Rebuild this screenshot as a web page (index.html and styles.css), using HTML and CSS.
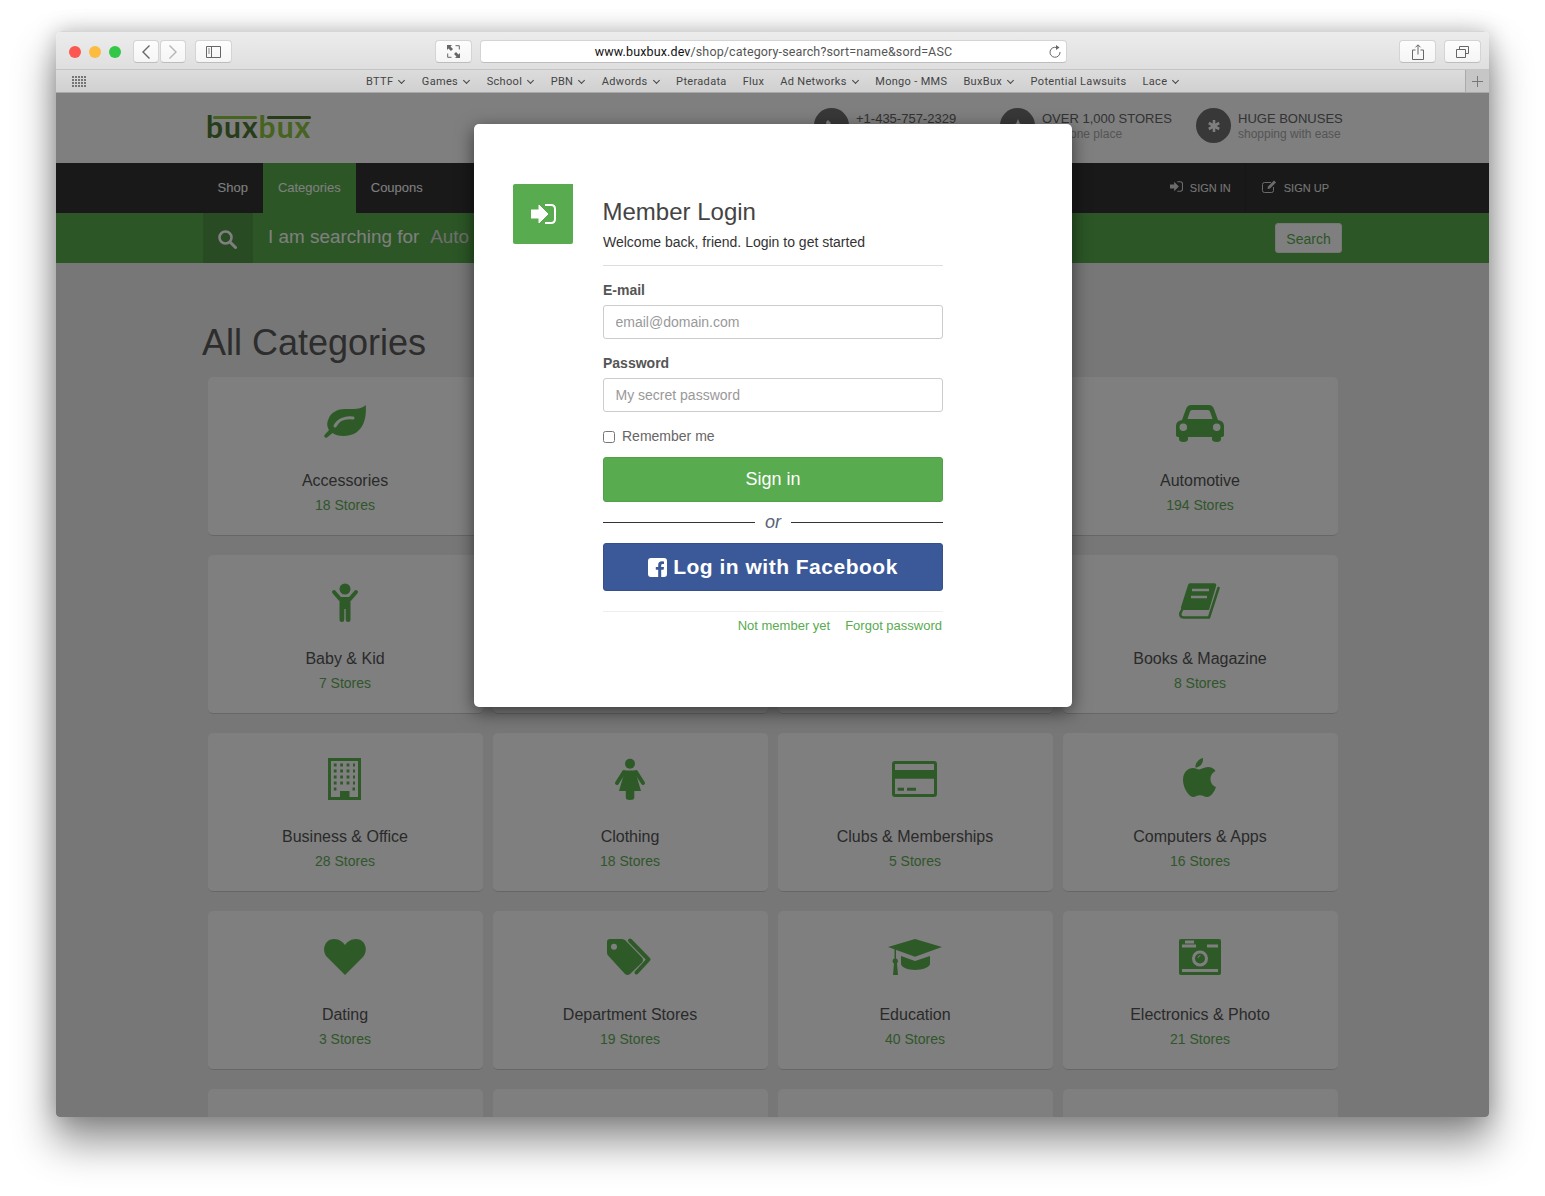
FILE: index.html
```html
<!DOCTYPE html>
<html lang="en">
<head>
  <meta charset="UTF-8">
  <meta name="viewport" content="width=device-width, initial-scale=1.0">
  <title>BuxBux - All Categories</title>
  <link rel="stylesheet" href="styles.css">
</head>
<body>
  <div class="window">
    <div class="toolbar">
      <div class="lights"><span class="light red"></span><span class="light yellow"></span><span class="light green"></span></div>
      <div class="nav-btns">
        <span class="tool-btn small"><svg width="10" height="16" viewBox="0 0 10 16"><path d="M8.5 1.5 2 8l6.5 6.5" fill="none" stroke="#666" stroke-width="1.4"/></svg></span>
        <span class="tool-btn small"><svg width="10" height="16" viewBox="0 0 10 16"><path d="M1.5 1.5 8 8l-6.5 6.5" fill="none" stroke="#b5b5b5" stroke-width="1.4"/></svg></span>
      </div>
      <span class="tool-btn sidebar-btn"><svg width="15" height="12" viewBox="0 0 15 12"><path d="M.5.5h14v11H.5zM5.5.5v11" fill="none" stroke="#666"/><path d="M2 3h2M2 5h2M2 7h2" stroke="#888"/></svg></span>
      <span class="tool-btn expand-btn"><svg width="13" height="13" viewBox="0 0 13 13"><path d="M0 0h5L3.5 1.5 6 4 4 6 1.5 3.5 0 5zM13 13H8l1.5-1.5L7 9l2-2 2.5 2.5L13 8z" fill="#666"/><path d="M8.5.7h3.8v3.8M.7 8.5v3.8h3.8" fill="none" stroke="#666"/></svg></span>
      <div class="url-bar">
        <span class="url"><b>www.buxbux.dev</b>/shop/category-search?sort=name&amp;sord=ASC</span>
        <svg class="reload" width="12" height="13" viewBox="0 0 12 13"><path d="M7.8 2.6A5 5 0 1 0 11 7" fill="none" stroke="#666"/><path d="M7 0l3.5 2.6L7 5z" fill="#666"/></svg>
      </div>
      <div class="right-btns">
        <span class="tool-btn"><svg width="12" height="16" viewBox="0 0 12 16"><path d="M3.5 6H.5v9.500h11V6h-3M6 10.500V1M3.5 3.300 6 .8l2.500 2.500" fill="none" stroke="#666"/></svg></span>
        <span class="tool-btn"><svg width="13" height="12" viewBox="0 0 13 12"><path d="M3.5 3V.5h9v7H9.500M.5 3.500h9v8h-9z" fill="none" stroke="#666"/></svg></span>
      </div>
    </div>
    <div class="bookmarks">
      <svg class="grid-icon" width="14" height="11" viewBox="0 0 14 11"><path d="M0 1h14M0 4h14M0 7h14M0 10h14" stroke="#555" stroke-width="1.6" stroke-dasharray="2 1"/></svg>
      <div class="bm-list">
        <a class="bm">BTTF <i class="chev"></i></a>
        <a class="bm">Games <i class="chev"></i></a>
        <a class="bm">School <i class="chev"></i></a>
        <a class="bm">PBN <i class="chev"></i></a>
        <a class="bm">Adwords <i class="chev"></i></a>
        <a class="bm">Pteradata</a>
        <a class="bm">Flux</a>
        <a class="bm">Ad Networks <i class="chev"></i></a>
        <a class="bm">Mongo - MMS</a>
        <a class="bm">BuxBux <i class="chev"></i></a>
        <a class="bm">Potential Lawsuits</a>
        <a class="bm">Lace <i class="chev"></i></a>
      </div>
      <span class="bm-add"><svg width="11" height="11" viewBox="0 0 11 11"><path d="M5.5 0v11M0 5.500h11" stroke="#777"/></svg></span>
    </div>

    <div class="page">
      <header class="site-header">
        <div class="container header-row">
          <div class="logo">
            <div class="logo-bars"><span class="bar-light"></span><span class="bar-dark"></span></div>
            <div class="logo-text"><span class="dark">bux</span><span class="light-g">bux</span></div>
          </div>
          <div class="perks">
            <div class="perk phone">
              <span class="perk-icon"><svg width="14" height="14" viewBox="0 0 14 14"><path d="M3 1l3 3-1.5 2L8 9.500 10 8l3 3-2 2C6 13 1 8 1 3z" fill="#fff"/></svg></span>
              <div class="perk-text"><strong>+1-435-757-2329</strong><small>&nbsp;</small></div>
            </div>
            <div class="perk stores">
              <span class="perk-icon"><svg width="14" height="14" viewBox="0 0 14 14"><path d="M7 0l2 4.800 5 .4-3.800 3.300L11.300 14 7 11.200 2.700 14l1.100-5.500L0 5.200l5-.4z" fill="#fff"/></svg></span>
              <div class="perk-text"><strong>OVER 1,000 STORES</strong><small>all in one place</small></div>
            </div>
            <div class="perk">
              <span class="perk-icon"><svg width="12" height="12" viewBox="0 0 12 12"><path d="M6 0v12M.8 3l10.400 6M.8 9l10.400-6" stroke="#fff" stroke-width="2.6"/></svg></span>
              <div class="perk-text"><strong>HUGE BONUSES</strong><small>shopping with ease</small></div>
            </div>
          </div>
        </div>
      </header>

      <nav class="main-nav">
        <div class="container nav-row">
          <div class="nav-left">
            <a href="#">Shop</a>
            <a href="#" class="active">Categories</a>
            <a href="#">Coupons</a>
          </div>
          <div class="nav-right">
            <a href="#" class="sign-in"><svg width="13" height="11" viewBox="0 0 25 20"><path d="M0 6h8V1l9 9-9 9v-5H0z" fill="#fff"/><path d="M14 1h6q4 0 4 4v10q0 4-4 4h-6" fill="none" stroke="#fff" stroke-width="2"/></svg>SIGN IN</a>
            <a href="#" class="sign-up"><svg width="15" height="13" viewBox="0 0 15 13"><path d="M9 2.5H2.5q-2 0-2 2v6q0 2 2 2h7q2 0 2-2V7" fill="none" stroke="#fff"/><path d="M5.5 9 6 6.500 12 .5l2 2-6 6z" fill="#fff"/></svg>SIGN UP</a>
          </div>
        </div>
      </nav>

      <div class="search-bar">
        <div class="container search-row">
          <span class="search-icon"><svg width="20" height="20" viewBox="0 0 20 20"><circle cx="8.5" cy="8.5" r="6" fill="none" stroke="#fff" stroke-width="2.6"/><path d="M13 13l5.500 5.500" stroke="#fff" stroke-width="3" stroke-linecap="round"/></svg></span>
          <span class="search-label">I am searching for</span>
          <span class="search-value">Auto</span>
          <button class="search-btn">Search</button>
        </div>
      </div>

      <main class="container">
        <h1 class="page-title">All Categories</h1>
        <div class="cat-grid">
          <a class="cat-card">
            <svg class="cat-icon" viewBox="0 0 48 42"><path d="M44.7 3C45.5 12 45 34 22 34 18 34 14 33 11.5 31L6 35.5C4.5 36.5 2.5 35 3.5 33L8 28C5.5 24 6 20 7.5 17 10 10 17 7 24 7 32 7 40 7.5 44.7 3Z"/><path class="cut" d="M14 24C17 18 24 15 32 16"/></svg>
            <h3>Accessories</h3><p>18 Stores</p>
          </a>
          <div class="cat-card"></div>
          <div class="cat-card"></div>
          <a class="cat-card">
            <svg class="cat-icon" viewBox="0 0 48 42"><path fill-rule="evenodd" d="M6 18 10 7Q11.5 3 15 3H33Q36.5 3 38 7L42 18Q48 19 48 24V33Q48 35 45 35V37Q45 40 41 40 36 40 36 37V35H12V37Q12 40 7.5 40 3 40 3 37V35Q0 35 0 33V24Q0 19 6 18ZM11.5 17H36.5L34 9.5Q33.5 8 32 8H16Q14.5 8 14 9.5ZM7.3 21.5A3.7 3.7 0 1 0 7.3 29 3.7 3.7 0 1 0 7.3 21.5ZM40.7 21.5A3.7 3.7 0 1 0 40.7 29 3.7 3.7 0 1 0 40.7 21.5Z"/></svg>
            <h3>Automotive</h3><p>194 Stores</p>
          </a>

          <a class="cat-card">
            <svg class="cat-icon" viewBox="0 0 48 42"><circle cx="24" cy="9" r="5.5"/><path class="line" d="M13 12 19 19H29L35 12"/><path d="M18.5 17H29.5V39.5Q29.5 42 27 42 24.7 42 24.7 39.5V29H23.3V39.5Q23.3 42 21 42 18.5 42 18.5 39.5Z"/></svg>
            <h3>Baby &amp; Kid</h3><p>7 Stores</p>
          </a>
          <div class="cat-card"></div>
          <div class="cat-card"></div>
          <a class="cat-card">
            <svg class="cat-icon" viewBox="0 0 48 42"><path d="M14 3.3H38Q41 3.3 40 6.5L33 30H7Q4.5 30 5 27L12 5Q12.5 3.3 14 3.3Z"/><path class="cut thin" d="M16 10H33M15 17H31"/><path class="line thin-line" d="M6 30C3 34 4 37.5 8 37.5H33L42.5 8"/></svg>
            <h3>Books &amp; Magazine</h3><p>8 Stores</p>
          </a>

          <a class="cat-card">
            <svg class="cat-icon" viewBox="0 0 48 42"><path fill-rule="evenodd" d="M7 0H40V42H7ZM10 3V39H19V33H28.5V39H37V3Z"/><path class="line dots" d="M12.8 7H34M12.8 13H34M12.8 19H34M12.8 25H34"/><path class="line dots" d="M12.8 31H15.4M31.5 31H34"/></svg>
            <h3>Business &amp; Office</h3><p>28 Stores</p>
          </a>
          <a class="cat-card">
            <svg class="cat-icon" viewBox="0 0 48 42"><circle cx="24" cy="5.7" r="5"/><path d="M19 12.5H29L35 33H28.3V39.5Q28.3 42 24 42 19.8 42 19.8 39.5V33H13Z"/><path class="line" d="M18 14 11 25M30 14 37 25"/></svg>
            <h3>Clothing</h3><p>18 Stores</p>
          </a>
          <a class="cat-card">
            <svg class="cat-icon" viewBox="0 0 48 42"><path fill-rule="evenodd" d="M4 3H43Q46 3 46 6V36Q46 39 43 39H4Q1 39 1 36V6Q1 3 4 3ZM4 6V12H43V6ZM4 20.7V36H43V20.7Z"/><path d="M6.6 29.7H13V32.7H6.6ZM16 29.7H25V32.7H16Z"/></svg>
            <h3>Clubs &amp; Memberships</h3><p>5 Stores</p>
          </a>
          <a class="cat-card">
            <svg class="cat-icon" viewBox="0 0 48 42"><path d="M27 0C27.5 5 24 9.5 19.5 9.5 19 5 22.5 1 27 0Z"/><path d="M23 11.5C25 11.5 28 9 32 9 35 9 38 10.5 39.5 13 36 15 34.5 17.5 34.5 21 34.5 25 37 28 40 29 38.5 34 34.5 39 31 39 28 39 27 37.3 24 37.3 21 37.3 19.5 39 17 39 13 39 7 30 7 22 7 14 12 10 17 10 19.5 10 21.5 11.5 23 11.5Z"/></svg>
            <h3>Computers &amp; Apps</h3><p>16 Stores</p>
          </a>

          <a class="cat-card">
            <svg class="cat-icon" viewBox="0 0 48 42"><path d="M24 39 6 21C0 14 4 3 13 3 18 3 22 6 24 9 26 6 30 3 35 3 44 3 48 14 42 21Z"/></svg>
            <h3>Dating</h3><p>3 Stores</p>
          </a>
          <a class="cat-card">
            <svg class="cat-icon" viewBox="0 0 48 42"><path fill-rule="evenodd" d="M4 3H16Q18 3 19.5 4.5L36 21.5Q38 24 36 26.5L24 38Q21.5 40 19 38L2.5 20Q1 18.5 1 16.5V6Q1 3 4 3ZM8 7.7A3 3 0 1 0 8 13.7 3 3 0 1 0 8 7.7Z"/><path class="line" d="M24 4.5 42.5 23.5 30.5 36.5"/></svg>
            <h3>Department Stores</h3><p>19 Stores</p>
          </a>
          <a class="cat-card">
            <svg class="cat-icon wide" viewBox="0 0 56 42"><path d="M28 3 55 11 28 20.7 1 11Z"/><path d="M14 20 28 25 43 20V28C43 31 35 34 28 34 21 34 14 31 14 28Z"/><path d="M7.5 12H9V22.5A2.7 2.7 0 1 1 7.5 22.5ZM7 27H10L11 39H6Z"/></svg>
            <h3>Education</h3><p>40 Stores</p>
          </a>
          <a class="cat-card">
            <svg class="cat-icon" viewBox="0 0 48 42"><rect x="3" y="3" width="42" height="36" rx="2"/><path class="cut flat" d="M9 6H18M6 10H20M31 10H42M6 34.5H42"/><circle class="cut ring" cx="24" cy="22.5" r="6.5"/><path class="cut arc" d="M22 21.5Q22.5 19.8 24 19.5"/></svg>
            <h3>Electronics &amp; Photo</h3><p>21 Stores</p>
          </a>

          <div class="cat-card"></div>
          <div class="cat-card"></div>
          <div class="cat-card"></div>
          <div class="cat-card"></div>
        </div>
      </main>

      <div class="overlay">
        <div class="modal">
          <div class="modal-icon"><svg width="25" height="20" viewBox="0 0 25 20"><path d="M0 6h8V1l9 9-9 9v-5H0z" fill="#fff" stroke="#fff" stroke-linejoin="round"/><path d="M14 1h6q4 0 4 4v10q0 4-4 4h-6" fill="none" stroke="#fff" stroke-width="2"/></svg></div>
          <form class="login-form">
            <h2>Member Login</h2>
            <p class="lead">Welcome back, friend. Login to get started</p>
            <label for="email">E-mail</label>
            <input type="text" id="email" placeholder="email@domain.com">
            <label for="password">Password</label>
            <input type="password" id="password" placeholder="My secret password">
            <label class="remember"><input type="checkbox">Remember me</label>
            <button type="button" class="btn-signin">Sign in</button>
            <div class="or-row"><span>or</span></div>
            <button type="button" class="btn-fb"><svg width="19" height="19" viewBox="0 0 19 19"><path fill-rule="evenodd" d="M3 0H16Q19 0 19 3V16Q19 19 16 19H13.2V11.8H15.6L16 9H13.2V7.3Q13.2 6 14.5 6H16V3.4Q15 3.3 14 3.3 10.2 3.3 10.2 7V9H7.8V11.8H10.2V19H3Q0 19 0 16V3Q0 0 3 0Z" fill="#fff"/></svg>Log in with Facebook</button>
            <div class="form-links">
              <a href="#">Not member yet</a>
              <a href="#">Forgot password</a>
            </div>
          </form>
        </div>
      </div>
    </div>
  </div>
</body>
</html>
```

FILE: styles.css
```css
html, body {
  margin: 0;
  height: 1196px;
  overflow: hidden;
  background: #fff;
}
body {
  font-family: 'Liberation Sans', sans-serif;
  color: #333;
  padding: 31px 56px 0 56px;
  box-sizing: border-box;
}
a {
  text-decoration: none;
  color: inherit;
}

/* browser window */
.window {
  height: 1086px;
  display: flex;
  flex-direction: column;
  border-radius: 6px 6px 4px 4px;
  box-shadow: 0 24px 40px 2px rgba(0, 0, 0, 0.42), 0 0 22px rgba(0, 0, 0, 0.22);
  overflow: hidden;
}
.toolbar {
  height: 39px;
  flex: none;
  box-sizing: border-box;
  display: flex;
  align-items: center;
  padding: 2px 8px 0 13px;
  background: linear-gradient(#ececec, #dfdfdf);
  border-top: 1px solid #d6d6d6;
  border-bottom: 1px solid #c4c4c4;
}
.lights {
  display: flex;
  gap: 8px;
}
.light {
  width: 12px;
  height: 12px;
  border-radius: 50%;
}
.red { background: #fc5753; }
.yellow { background: #fdbc40; }
.green { background: #33c748; }
.nav-btns {
  display: flex;
  gap: 1px;
  margin-left: 12px;
}
.tool-btn {
  display: flex;
  align-items: center;
  justify-content: center;
  width: 37px;
  height: 23px;
  box-sizing: border-box;
  background: linear-gradient(#fdfdfd, #f5f5f5);
  border: 1px solid #d4d4d4;
  border-bottom-color: #bdbdbd;
  border-radius: 4px;
}
.tool-btn.small { width: 26px; }
.sidebar-btn { margin-left: 9px; }
.expand-btn { margin-left: 203px; }
.url-bar {
  width: 587px;
  height: 23px;
  box-sizing: border-box;
  margin-left: 8px;
  display: flex;
  align-items: center;
  justify-content: center;
  position: relative;
  background: #fff;
  border: 1px solid #d4d4d4;
  border-bottom-color: #bdbdbd;
  border-radius: 4px;
  font-family: 'Roboto', sans-serif;
  font-size: 12.5px;
  letter-spacing: 0.13px;
  color: #555;
}
.url b {
  font-weight: 400;
  color: #111;
}
.reload {
  position: absolute;
  right: 5px;
  top: 4px;
}
.right-btns {
  display: flex;
  gap: 8px;
  margin-left: auto;
}

/* bookmarks bar */
.bookmarks {
  height: 23px;
  flex: none;
  box-sizing: border-box;
  display: flex;
  align-items: center;
  background: linear-gradient(#dcdcdc, #d0d0d0);
  border-bottom: 1px solid #a9a9a9;
  padding-left: 16px;
  font-family: 'Roboto', sans-serif;
  font-size: 11px;
  letter-spacing: 0.32px;
  color: #444;
}
.bm-list {
  display: flex;
  gap: 16px;
  margin-left: 280px;
}
.bm {
  white-space: nowrap;
}
.chev {
  display: inline-block;
  width: 4px;
  height: 4px;
  margin: 0 1.5px 2px 3px;
  border-right: 1.5px solid #444;
  border-bottom: 1.5px solid #444;
  transform: rotate(45deg);
}
.bm-add {
  margin-left: auto;
  align-self: stretch;
  width: 24px;
  display: flex;
  align-items: center;
  justify-content: center;
  background: #c6c6c6;
  border-left: 1px solid #aaa;
  box-sizing: border-box;
}

/* page below the overlay */
.page {
  flex: 1;
  position: relative;
  overflow: hidden;
  background: #eee;
}
.container {
  width: 1140px;
  margin-left: 146px;
  box-sizing: border-box;
}
.site-header {
  height: 70px;
  background: #fefefe;
}
.header-row {
  display: flex;
  justify-content: space-between;
  height: 70px;
  padding: 0 0 0 4px;
}
.logo {
  width: 105px;
  padding-top: 23px;
}
.logo-bars {
  display: flex;
  gap: 10px;
  padding-left: 7px;
  height: 3px;
}
.logo-bars span {
  width: 44px;
  border-radius: 2px;
}
.bar-light { background: #8cc63f; }
.bar-dark { background: #4f7a32; }
.logo-text {
  font-family: 'Lato', sans-serif;
  font-weight: 700;
  font-size: 30px;
  line-height: 24px;
  letter-spacing: 1px;
  margin-top: -5px;
}
.logo-text .dark { color: #4f7a32; }
.logo-text .light-g { color: #8cc63f; }
.perks {
  display: flex;
  padding-top: 15px;
}
.perk {
  display: flex;
  align-items: flex-start;
  gap: 7px;
  width: 146px;
}
.perk.phone { width: 186px; }
.perk.stores { width: 196px; }
.perk-icon {
  width: 35px;
  height: 35px;
  flex: none;
  border-radius: 50%;
  background: #707070;
  display: flex;
  align-items: center;
  justify-content: center;
}
.perk-text {
  padding-top: 3px;
}
.perk strong {
  display: block;
  font-weight: 400;
  font-size: 13px;
  line-height: 15px;
  color: #666;
  white-space: nowrap;
}
.perk small {
  display: block;
  font-size: 12px;
  line-height: 17px;
  color: #aaa;
  white-space: nowrap;
}
.main-nav {
  height: 50px;
  background: #333;
}
.nav-row {
  display: flex;
  justify-content: space-between;
  height: 50px;
  font-size: 13px;
  color: #fff;
}
.nav-left {
  display: flex;
  margin-left: 1px;
}
.nav-left a {
  padding: 0 15.5px 0 14.5px;
  line-height: 49px;
}
.nav-left a.active {
  background: #58ad4c;
  color: #fff;
}
.nav-right {
  display: flex;
  font-size: 11px;
}
.nav-right a {
  display: flex;
  align-items: center;
  gap: 7px;
  color: #eee;
}
.nav-right a svg {
  margin-top: -3px;
  opacity: 0.8;
}
.sign-in {
  padding-right: 14px;
  border-right: 1px solid #2c2c2c;
}
.sign-up {
  padding: 0 13px 0 16px;
}
.search-bar {
  height: 50px;
  background: #58ad4c;
}
.search-row {
  display: flex;
  align-items: center;
  height: 50px;
  font-size: 18.9px;
}
.search-icon {
  width: 50px;
  height: 50px;
  margin-left: 1px;
  padding: 2px 2px 0 0;
  box-sizing: border-box;
  background: #519746;
  display: flex;
  align-items: center;
  justify-content: center;
}
.search-label {
  margin-left: 15px;
  margin-top: -2px;
  color: #fff;
}
.search-value {
  margin-left: 11px;
  margin-top: -2px;
  color: #ddd;
}
.search-btn {
  margin-left: auto;
  width: 67px;
  height: 30px;
  padding: 2px 0 0;
  border: 1px solid #eee;
  border-radius: 3px;
  background: #fff;
  color: #58ad4c;
  font-family: inherit;
  font-size: 14px;
}
.page-title {
  font-size: 36px;
  font-weight: 400;
  line-height: 40px;
  color: #5a5a5a;
  margin: 60px 0 14px;
}
.cat-grid {
  display: grid;
  grid-template-columns: repeat(4, 275px);
  grid-auto-rows: 159px;
  gap: 19px 10px;
  padding-left: 6px;
}
.cat-card {
  display: block;
  box-sizing: border-box;
  padding: 25px 1px 0 0;
  text-align: center;
  background: #fefefe;
  border-bottom: 1px solid #ccc;
  border-radius: 5px;
}
.cat-icon {
  display: block;
  width: 48px;
  height: 42px;
  margin: 0 auto;
  fill: #5cb450;
}
.cat-icon.wide {
  width: 56px;
}
.cat-icon .cut {
  fill: none;
  stroke: #fefefe;
  stroke-width: 3;
  stroke-linecap: round;
}
.cat-icon .cut.thin {
  stroke-width: 2.5;
  stroke-linecap: butt;
}
.cat-icon .cut.flat {
  stroke-width: 3.2;
  stroke-linecap: butt;
}
.cat-icon .cut.ring {
  stroke-width: 3;
}
.cat-icon .cut.arc {
  stroke-width: 1;
}
.cat-icon .line {
  fill: none;
  stroke: #5cb450;
  stroke-width: 4;
  stroke-linecap: round;
  stroke-linejoin: round;
}
.cat-icon .line.thin-line {
  stroke-width: 2.5;
}
.cat-icon .line.dots {
  stroke-width: 2.8;
  stroke-linecap: butt;
  stroke-dasharray: 2.8 3.6;
}
.cat-card h3 {
  margin: 26px 0 3px;
  font-size: 16px;
  font-weight: 400;
  line-height: 22px;
  color: #555;
}
.cat-card p {
  margin: 0;
  font-size: 14px;
  line-height: 20px;
  color: #63ad58;
}

/* login dialog */
.overlay {
  position: absolute;
  inset: 0;
  background: rgba(0, 0, 0, 0.5);
}
.modal {
  position: absolute;
  left: 418px;
  top: 31px;
  width: 598px;
  height: 583px;
  box-sizing: border-box;
  padding: 60px 0 0 39px;
  display: flex;
  gap: 30px;
  background: #fff;
  border-radius: 5px;
  box-shadow: 0 5px 18px rgba(0, 0, 0, 0.55);
}
.modal-icon {
  width: 60px;
  height: 60px;
  flex: none;
  background: #58ab4f;
  border-radius: 2px 0 2px 2px;
  display: flex;
  align-items: center;
  justify-content: center;
}
.login-form {
  width: 340px;
  font-size: 14px;
}
.login-form h2 {
  margin: 14px 0 0 -0.5px;
  font-size: 24px;
  font-weight: 400;
  line-height: 28px;
  color: #444;
}
.lead {
  margin: 6px 0 0;
  line-height: 20px;
  padding-bottom: 13px;
  border-bottom: 1px solid #ddd;
}
.login-form label {
  display: block;
  margin-top: 14px;
  font-weight: 700;
  line-height: 20px;
  color: #555;
}
.login-form input[type="text"],
.login-form input[type="password"] {
  display: block;
  width: 100%;
  height: 34px;
  box-sizing: border-box;
  margin-top: 5px;
  padding: 0 11.5px;
  border: 1px solid #ccc;
  border-radius: 3px;
  font-family: inherit;
  font-size: 14px;
  color: #555;
}
.login-form ::placeholder {
  color: #999;
  opacity: 1;
}
.login-form label.remember {
  display: flex;
  align-items: center;
  margin-top: 14px;
  font-weight: 400;
  color: #666;
}
.remember input {
  width: 12px;
  height: 12px;
  margin: 1px 7px 0 0;
}
.btn-signin {
  display: block;
  width: 100%;
  height: 45px;
  margin-top: 11px;
  padding: 0;
  border: 1px solid #52a048;
  border-radius: 3px;
  background: #58ab4f;
  color: #fff;
  font-family: inherit;
  font-size: 18px;
}
.or-row {
  display: flex;
  align-items: center;
  gap: 10px;
  height: 41px;
  font-size: 18px;
  font-style: italic;
  color: #5a6478;
}
.or-row::before,
.or-row::after {
  content: "";
  flex: 1;
  border-top: 1px solid #333;
}
.btn-fb {
  display: flex;
  align-items: center;
  justify-content: center;
  gap: 6px;
  width: 100%;
  height: 48px;
  padding: 0;
  border: 1px solid #35508a;
  border-radius: 3px;
  background: #3b5998;
  color: #fff;
  font-family: inherit;
  font-size: 21px;
  font-weight: 700;
  letter-spacing: 0.5px;
}
.form-links {
  display: flex;
  justify-content: flex-end;
  gap: 15px;
  margin-top: 20px;
  padding-top: 5px;
  border-top: 1px solid #eee;
  padding-right: 1px;
  font-size: 13px;
  line-height: 18px;
  color: #58ab4f;
}
```
